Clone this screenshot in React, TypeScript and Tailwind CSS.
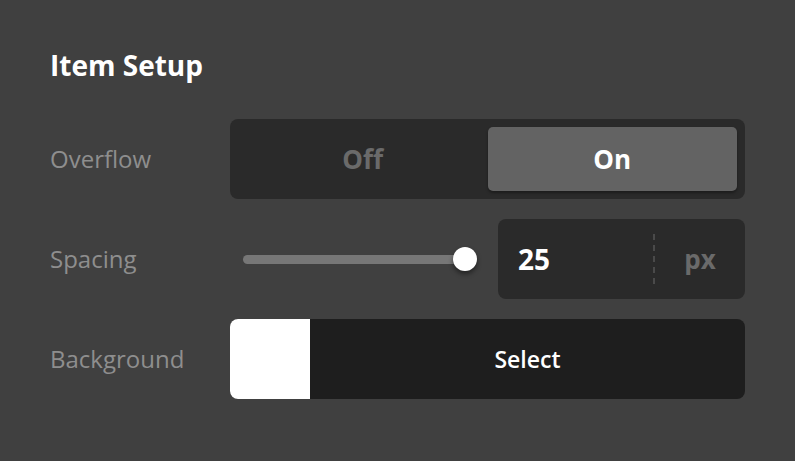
import React from 'react';

export default function App() {
  return (
    <div
      className="min-h-screen bg-[#404040] px-[50px] pt-[43px] pb-10"
      style={{ fontFamily: '"Open Sans", "Noto Sans", sans-serif' }}>
      <h2 className="text-[28px] leading-[44px] font-bold text-white mb-[32px]">Item Setup</h2>

      <div className="grid grid-cols-[180px_1fr] gap-y-5 items-center">
        <span className="text-[24px] text-[#8e8e8e]">Overflow</span>
        <div className="h-20 rounded-lg bg-[#2a2a2a] p-2 flex">
          <button className="flex-1 text-[26px] font-bold text-[#6a6a6a]">Off</button>
          <button className="flex-1 rounded-[5px] bg-[#636363] text-[26px] font-bold text-white shadow-[0_2px_3px_rgba(0,0,0,0.35)]">
            On
          </button>
        </div>

        <span className="text-[24px] text-[#8e8e8e]">Spacing</span>
        <div className="flex items-center gap-5">
          <div className="flex-1 h-20 flex items-center pl-[13px] pr-[13px]">
            <div className="relative flex-1 h-[9px] rounded-full bg-[#777777]">
              <div className="absolute right-[-12px] top-1/2 -translate-y-1/2 w-6 h-6 rounded-full bg-white shadow-[0_3px_5px_rgba(0,0,0,0.45)]" />
            </div>
          </div>
          <div className="w-[247px] h-20 rounded-lg bg-[#2a2a2a] flex items-center">
            <span className="flex-1 pl-5 text-[28px] font-bold text-white">25</span>
            <div className="h-[50px] border-l-2 border-dashed border-[#4a4a4a]" />
            <span className="w-[90px] text-center text-[26px] font-bold text-[#6a6a6a]">px</span>
          </div>
        </div>

        <span className="text-[24px] text-[#8e8e8e]">Background</span>
        <button className="h-20 rounded-lg overflow-hidden flex bg-[#1e1e1e]">
          <div className="w-20 h-full bg-white" />
          <span className="flex-1 self-center text-[23px] font-semibold text-white">Select</span>
        </button>
      </div>
    </div>);

}
